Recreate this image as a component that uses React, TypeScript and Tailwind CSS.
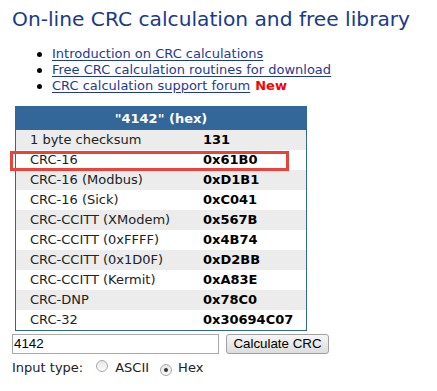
import React from "react";

const rows: [string, string][] = [
  ["1 byte checksum", "131"],
  ["CRC-16", "0x61B0"],
  ["CRC-16 (Modbus)", "0xD1B1"],
  ["CRC-16 (Sick)", "0xC041"],
  ["CRC-CCITT (XModem)", "0x567B"],
  ["CRC-CCITT (0xFFFF)", "0x4B74"],
  ["CRC-CCITT (0x1D0F)", "0xD2BB"],
  ["CRC-CCITT (Kermit)", "0xA83E"],
  ["CRC-DNP", "0x78C0"],
  ["CRC-32", "0x30694C07"],
];

const links = [
  "Introduction on CRC calculations",
  "Free CRC calculation routines for download",
  "CRC calculation support forum",
];

function Radio({ checked }: { checked?: boolean }) {
  return (
    <span className="inline-flex h-[12px] w-[12px] items-center justify-center rounded-full border border-[#a8a8a8] bg-gradient-to-b from-[#e6e6e6] to-[#fbfbfb]">
      {checked && <span className="h-[4px] w-[4px] rounded-full bg-[#333]" />}
    </span>
  );
}

export default function App() {
  return (
    <div
      className="relative h-[391px] w-[437px] overflow-hidden bg-white text-[13px] text-[#222]"
      style={{ fontFamily: '"DejaVu Sans", Verdana, sans-serif' }}
    >
      <h1 className="ml-[12px] mt-[7px] text-[20.2px] leading-[24px] font-normal text-[#183a8a] whitespace-nowrap">
        On-line CRC calculation and free library
      </h1>
      <ul className="mt-[15px] flex flex-col">
        {links.map((l, i) => (
          <li key={l} className="flex h-[16px] items-center leading-[16px]">
            <span className="ml-[37px] mr-[10px] h-[5px] w-[5px] rounded-full bg-black" />
            <a className="text-[#1f3a93] underline underline-offset-2" href="#">
              {l}
            </a>
            {i === 2 && <b className="ml-[5px] text-[#ff0000]">New</b>}
          </li>
        ))}
      </ul>
      <div className="ml-[15px] mt-[12px] w-[292px] border border-[#336699]">
        <div className="flex h-[23px] items-center justify-center bg-[#336699] font-bold text-white">
          "4142" (hex)
        </div>
        {rows.map(([k, v], i) => (
          <div
            key={k}
            className={`flex h-[20px] items-center leading-[20px] ${
              i % 2 === 0 ? "bg-[#ececec]" : "bg-white"
            }`}
          >
            <span className="w-[187px] pl-[14px]">{k}</span>
            <span className="font-bold text-black">{v}</span>
          </div>
        ))}
      </div>
      <div className="ml-[12px] mt-[3px] flex items-center gap-[7px]">
        <div
          className="flex h-[20px] w-[207px] items-center border border-[#a9a9a9] px-[1px] text-[13.33px] text-black"
          style={{ fontFamily: '"Liberation Sans", Arial, sans-serif' }}
        >
          4142
        </div>
        <button
          className="flex h-[20px] w-[103px] items-center justify-center rounded-[3px] border border-[#a0a0a0] bg-gradient-to-b from-[#f6f6f6] to-[#dddddd] text-[13.33px] text-black"
          style={{ fontFamily: '"Liberation Sans", Arial, sans-serif' }}
        >
          Calculate CRC
        </button>
      </div>
      <div className="ml-[12px] mt-[4px] flex h-[20px] items-center">
        <span>Input type:</span>
        <span className="ml-[13px] mr-[7px]">
          <Radio />
        </span>
        <span>ASCII</span>
        <span className="ml-[11px] mr-[6px]">
          <Radio checked />
        </span>
        <span>Hex</span>
      </div>
      <div className="pointer-events-none absolute left-[10px] top-[151px] h-[20px] w-[279px] border-[3px] border-[#e8443c]" />
    </div>
  );
}
